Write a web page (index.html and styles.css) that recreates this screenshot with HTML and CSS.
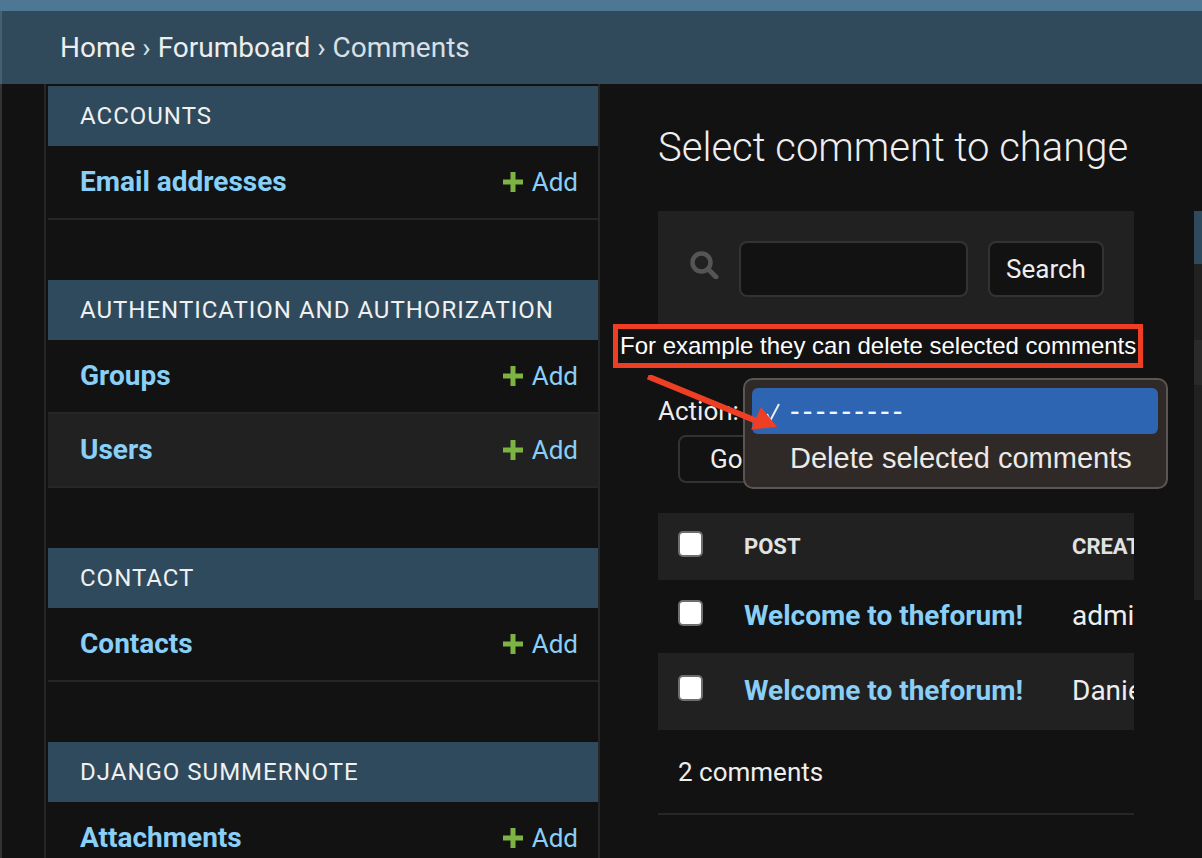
FILE: index.html
```html
<!DOCTYPE html>
<html lang="en">
<head>
<meta charset="utf-8">
<title>Select comment to change</title>
<link rel="stylesheet" href="styles.css">
</head>
<body>
<div class="topbar"></div>
<div class="breadcrumbs"><a>Home</a> › <a>Forumboard</a> › Comments</div>
<div class="shell">
  <div class="toggle"></div>
  <nav class="sidebar">
    <section class="module">
      <h2 class="caption">Accounts</h2>
      <div class="row"><a class="model">Email addresses</a><a class="add"><svg class="plus" viewBox="0 0 22 22"><path d="M8.5 1h5v7.500h7.500v5h-7.500v7.500h-5v-7.500h-7.500v-5h7.500z"/></svg>Add</a></div>
    </section>
    <section class="module">
      <h2 class="caption">Authentication and Authorization</h2>
      <div class="row"><a class="model">Groups</a><a class="add"><svg class="plus" viewBox="0 0 22 22"><path d="M8.5 1h5v7.500h7.500v5h-7.500v7.500h-5v-7.500h-7.500v-5h7.500z"/></svg>Add</a></div>
      <div class="row alt"><a class="model">Users</a><a class="add"><svg class="plus" viewBox="0 0 22 22"><path d="M8.5 1h5v7.500h7.500v5h-7.500v7.500h-5v-7.500h-7.500v-5h7.500z"/></svg>Add</a></div>
    </section>
    <section class="module">
      <h2 class="caption">Contact</h2>
      <div class="row"><a class="model">Contacts</a><a class="add"><svg class="plus" viewBox="0 0 22 22"><path d="M8.5 1h5v7.500h7.500v5h-7.500v7.500h-5v-7.500h-7.500v-5h7.500z"/></svg>Add</a></div>
    </section>
    <section class="module">
      <h2 class="caption">Django Summernote</h2>
      <div class="row"><a class="model">Attachments</a><a class="add"><svg class="plus" viewBox="0 0 22 22"><path d="M8.5 1h5v7.500h7.500v5h-7.500v7.500h-5v-7.500h-7.500v-5h7.500z"/></svg>Add</a></div>
    </section>
  </nav>
  <main class="main">
    <div class="content">
      <h1 class="title">Select comment to change</h1>
      <div class="toolbar">
        <svg class="search-icon" viewBox="0 0 30 28"><circle cx="12.500" cy="11.500" r="9" fill="none" stroke="#555" stroke-width="4.500"/><path d="M19 18l8 8" stroke="#555" stroke-width="5" stroke-linecap="round"/></svg>
        <div class="search-input"></div>
        <div class="btn search-btn">Search</div>
      </div>
      <div class="actions">
        <div class="action-label">Action:</div>
        <div class="btn go-btn">Go</div>
      </div>
      <div class="results">
        <table class="table">
          <thead>
            <tr><th class="check-col"><span class="check"></span></th><th class="post-col">Post</th><th>Created by</th></tr>
          </thead>
          <tbody>
            <tr class="row-one"><td class="check-col"><span class="check"></span></td><td><a class="model">Welcome to theforum!</a></td><td>admin</td></tr>
            <tr class="row-two"><td class="check-col"><span class="check"></span></td><td><a class="model">Welcome to theforum!</a></td><td>Daniel</td></tr>
          </tbody>
        </table>
      </div>
      <p class="paginator">2 comments</p>
    </div>
    <aside class="filter">
      <div class="filter-head"></div>
      <div class="filter-a"></div>
      <div class="filter-b"></div>
      <div class="filter-c"></div>
    </aside>
  </main>
</div>

<div class="note">For example they can delete selected comments</div>
<div class="menu">
  <div class="menu-item selected"><svg class="tick" viewBox="0 0 16 22"><path d="M2 12l3 7L14 2" fill="none" stroke="#e8edf5" stroke-width="2"/></svg>---------</div>
  <div class="menu-item">Delete selected comments</div>
</div>
<svg class="arrow" viewBox="0 0 140 60"><path d="M1 1.500L112 47" stroke="#ee3f24" stroke-width="6"/><path d="M114 32L130 52 104 54.500z" fill="#ee3f24"/></svg>
</body>
</html>
```
FILE: styles.css
```css
* { box-sizing: border-box; }
html, body { margin: 0; height: 100%; }
body {
  width: 1202px;
  height: 858px;
  overflow: hidden;
  background: #121212;
  color: #eeeeee;
  font-family: Roboto, "Liberation Sans", sans-serif;
  font-size: 26px;
}
a { color: inherit; text-decoration: none; }

.topbar { height: 11px; background: #4e7793; }
.breadcrumbs {
  height: 73px;
  padding-left: 58px;
  border-left: 2px solid #46606f;
  background: #304a5b;
  color: #d8e0e5;
  font-size: 28px;
  line-height: 74px;
}
.breadcrumbs a { color: #eeeeee; }

.shell { display: flex; height: 774px; border-left: 2px solid #333333; }
.toggle { flex: 0 0 44px; border-right: 2px solid #262626; }
.sidebar {
  flex: 0 0 554px;
  padding: 2px 0 0 2px;
  border-right: 2px solid #262626;
}
.module { margin-bottom: 60px; }
.caption {
  height: 60px;
  margin: 0;
  padding-left: 32px;
  background: #2f4a5c;
  color: #f0f0f0;
  font-size: 24px;
  font-weight: 400;
  letter-spacing: 1px;
  line-height: 60px;
  text-transform: uppercase;
}
.row {
  display: flex;
  align-items: center;
  justify-content: space-between;
  height: 74px;
  padding: 0 20px 2px 32px;
  border-bottom: 2px solid #262626;
}
.row.alt { background: #212121; }
.model { color: #89cff7; font-size: 28px; font-weight: 700; }
.add { display: flex; align-items: center; margin-top: 2px; color: #89cff7; }
.plus { width: 22px; height: 22px; margin-right: 8px; fill: #7cb342; }

.main { display: flex; flex: 1; min-width: 0; padding-left: 58px; }
.content { flex: 0 0 476px; width: 476px; }
.title {
  height: 127px;
  margin: 0;
  color: #eeeeee;
  font-size: 40px;
  font-weight: 300;
  line-height: 128px;
  white-space: nowrap;
}
.toolbar {
  display: flex;
  align-items: flex-start;
  height: 124px;
  padding: 30px 0 0 31px;
  background: #212121;
}
.search-icon { width: 30px; height: 28px; margin: 10px 20px 0 0; }
.search-input {
  width: 229px;
  height: 56px;
  border: 2px solid #333333;
  border-radius: 8px;
  background: #121212;
}
.btn {
  display: flex;
  align-items: center;
  justify-content: center;
  border: 2px solid #333333;
  border-radius: 8px;
  background: #121212;
}
.search-btn { width: 116px; height: 56px; margin-left: 20px; }

.actions { padding-top: 61px; }
.action-label { height: 39px; line-height: 30px; }
.go-btn { width: 100px; height: 48px; margin-left: 20px; justify-content: flex-start; padding-left: 30px; }

.results { margin-top: 30px; overflow: hidden; }
.table { width: 640px; border-collapse: collapse; table-layout: fixed; }
.table th, .table td { padding: 0 0 0 20px; text-align: left; white-space: nowrap; overflow: hidden; }
.table th { height: 67px; background: #212121; color: #e2e2e2; font-size: 22px; font-weight: 700; text-transform: uppercase; }
.check-col { width: 66px; }
.post-col { width: 328px; }
.table td { padding-bottom: 2px; font-size: 28px; }
.row-one td { height: 73px; }
.row-two td { height: 77px; background: #212121; }
.check {
  display: block;
  width: 25px;
  height: 26px;
  margin-top: -5px;
  border: 2px solid #6e6e6e;
  border-radius: 5px;
  background: #ffffff;
}
.table th .check { margin-top: -6px; }
.paginator {
  height: 85px;
  margin: 0;
  padding-left: 20px;
  border-bottom: 2px solid #262626;
  line-height: 84px;
}

.filter { flex: 1; margin: 127px 0 0 60px; }
.filter-head { height: 53px; background: #2f4a5c; }
.filter-a { height: 76px; background: #212121; }
.filter-b { height: 45px; background: #2a2a2a; }
.filter-c { height: 215px; background: #212121; }

.note {
  position: absolute;
  left: 613px;
  top: 324px;
  width: 530px;
  height: 44px;
  padding-left: 2px;
  border: 5px solid #ee3f24;
  background: #121212;
  color: #ffffff;
  font-family: "Liberation Sans", Arial, sans-serif;
  font-size: 24px;
  line-height: 34px;
  white-space: nowrap;
}
.menu {
  position: absolute;
  left: 743px;
  top: 378px;
  width: 425px;
  height: 111px;
  padding: 8px 8px 0 7px;
  border: 2px solid #5b5653;
  border-radius: 10px;
  background: #2f2a28;
  color: #ece9e7;
  font-family: "Liberation Sans", Arial, sans-serif;
  font-size: 29px;
}
.menu-item { height: 46px; padding-left: 38px; line-height: 48px; white-space: nowrap; }
.menu-item.selected { position: relative; border-radius: 6px; background: #2e65b3; color: #f3f6fb; letter-spacing: 3.200px; line-height: 46px; }
.tick { position: absolute; left: 13px; top: 14px; width: 16px; height: 22px; }
.arrow { position: absolute; left: 647px; top: 375px; width: 140px; height: 60px; }
```
